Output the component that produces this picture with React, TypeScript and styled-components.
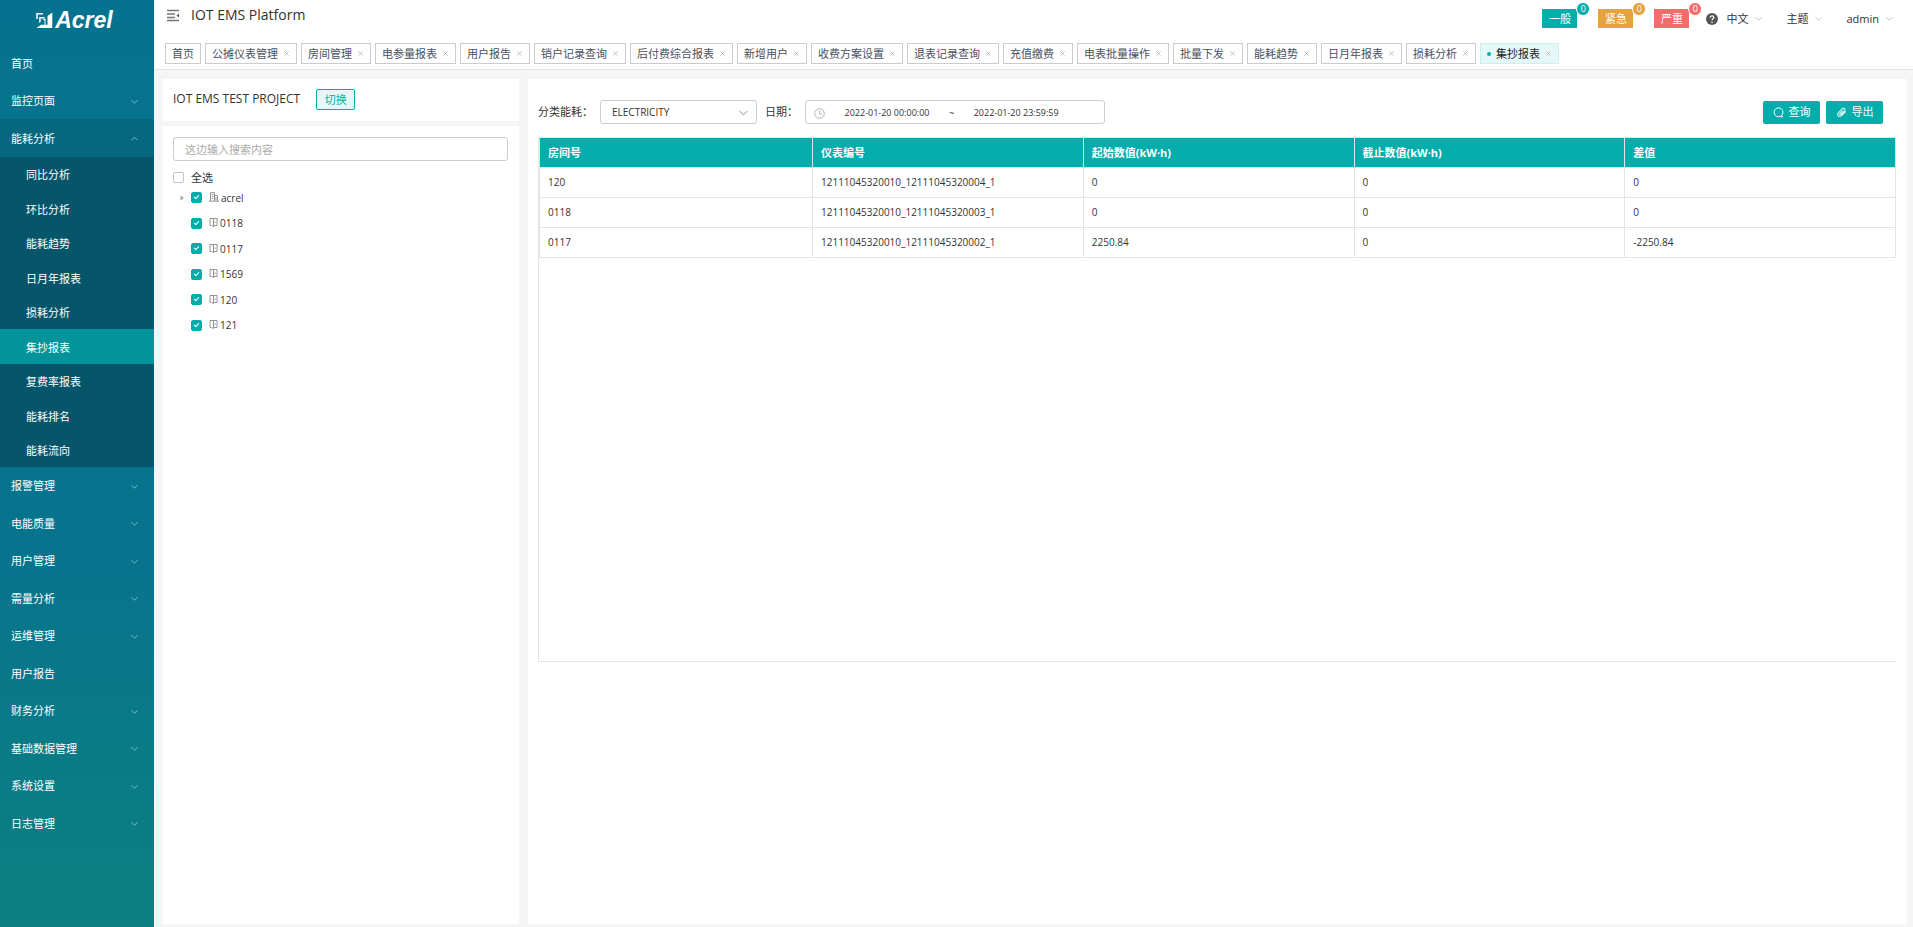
import React from "react";
import styled, { createGlobalStyle, css } from "styled-components";

const teal = "#03adab";

const GlobalStyle = createGlobalStyle`
  *, *::before, *::after { box-sizing: border-box; }
  html, body { margin: 0; padding: 0; }
  body {
    background: #f5f5f5;
    color: #333;
    font-family: "Open Sans", "Noto Sans CJK SC", sans-serif;
    font-size: 11px;
    line-height: 16px;
  }
  button, input, select { font: inherit; color: inherit; margin: 0; }
  button { cursor: pointer; }
  ul { list-style: none; margin: 0; padding: 0; }
  a { color: inherit; text-decoration: none; }
  h1, h2 { margin: 0; font-weight: 400; }
`;

const Page = styled.div`
  display: flex;
  min-height: 100vh;
`;

/* ---------- sidebar ---------- */

const Sidebar = styled.nav`
  flex: 0 0 154px;
  background: linear-gradient(180deg, #05738f 0%, #07748d 62%, #0b7f82 94%, #0b7f82 100%);
  color: #fff;
`;

const Logo = styled.div`
  display: flex;
  align-items: center;
  justify-content: center;
  gap: 2px;
  height: 44px;
  padding: 0 5px 4px 0;
`;

const LogoText = styled.span`
  font: italic 700 23px/24px "Liberation Sans", sans-serif;
`;

const MenuItem = styled.li`
  & > a { height: 38px; }
  &:nth-child(even) > a { height: 37px; }
`;

const MenuLink = styled.a<{ $open?: boolean }>`
  display: flex;
  align-items: center;
  justify-content: space-between;
  padding: 1px 16px 0 11px;
  background: ${(p) => (p.$open ? "#06687f" : "transparent")};
`;

const SubMenu = styled.ul`
  background: #05566a;
`;

const SubItem = styled.li`
  & > a { height: 34px; }
  &:nth-child(even) > a { height: 35px; }
`;

const SubLink = styled.a<{ $active?: boolean }>`
  display: flex;
  align-items: center;
  padding: 2px 0 0 26px;
  background: ${(p) => (p.$active ? "#03949b" : "transparent")};
`;

/* ---------- header ---------- */

const Main = styled.div`
  flex: 1;
  min-width: 0;
  display: flex;
  flex-direction: column;
`;

const Header = styled.header`
  background: #fff;
  border-bottom: 1px solid #e4e4e4;
`;

const TitleBar = styled.div`
  display: flex;
  align-items: flex-start;
  height: 43px;
  padding: 0 20px 0 13px;
`;

const FoldButton = styled.button`
  display: flex;
  padding: 0;
  margin: 9px 11px 0 0;
  border: 0;
  background: none;
`;

const Title = styled.h1`
  flex: 1;
  font-size: 14px;
  line-height: 30px;
  color: #303133;
`;

const Alerts = styled.div`
  display: flex;
  gap: 21px;
  margin: 9px 17px 0 0;
`;

const Alert = styled.button<{ $color: string }>`
  position: relative;
  width: 35px;
  height: 19px;
  padding: 0;
  border: 0;
  background: ${(p) => p.$color};
  color: #fff;
`;

const AlertCount = styled.span<{ $color: string }>`
  position: absolute;
  top: -7px;
  right: -13px;
  width: 14px;
  height: 14px;
  border: 1px solid #fff;
  border-radius: 7px;
  background: ${(p) => p.$color};
  font-size: 9px;
  line-height: 11px;
  text-align: center;
`;

const HeaderLinks = styled.div`
  display: flex;
  align-items: center;
  gap: 24px;
  height: 37px;
`;

const HelpButton = styled.button`
  display: flex;
  padding: 0;
  margin-right: -16px;
  border: 0;
  background: none;
`;

const Dropdown = styled.button`
  display: flex;
  align-items: center;
  gap: 7px;
  padding: 0;
  border: 0;
  background: none;
`;

const Tabs = styled.nav`
  display: flex;
  gap: 4px;
  padding: 0 11px 5px;
`;

const Tab = styled.div<{ $active?: boolean }>`
  display: flex;
  align-items: center;
  gap: 5px;
  height: 21px;
  padding: 0 6px;
  border: 1px solid ${(p) => (p.$active ? "#cdf0ef" : "#ccc")};
  background: ${(p) => (p.$active ? "#e5f7f7" : "#fff")};
  color: ${(p) => (p.$active ? "#222" : "#495060")};
  white-space: nowrap;
`;

const Dot = styled.span`
  width: 4px;
  height: 4px;
  border-radius: 2px;
  background: ${teal};
`;

const CloseButton = styled.button`
  display: flex;
  padding: 1px;
  border: 0;
  background: none;
`;

/* ---------- content ---------- */

const Content = styled.main`
  flex: 1;
  display: flex;
  gap: 9px;
  padding: 9px 6px 3px 9px;
`;

const LeftColumn = styled.div`
  flex: 0 0 356px;
  display: flex;
  flex-direction: column;
  gap: 5px;
`;

const Card = styled.section`
  background: #fff;
  padding: 10px;
`;

const ProjectCard = styled(Card)`
  display: flex;
  align-items: flex-start;
  gap: 16px;
  height: 42px;
`;

const ProjectName = styled.h2`
  font-size: 12px;
  line-height: 20px;
`;

const SwitchButton = styled.button`
  width: 39px;
  height: 21px;
  padding: 0;
  border: 1px solid ${teal};
  border-radius: 2px;
  background: #e6f7f7;
  color: ${teal};
`;

const TreeCard = styled(Card)`
  flex: 1;
  padding: 11px 11px 10px 10px;
`;

const field = css`
  height: 24px;
  border: 1px solid #ccc;
  border-radius: 3px;
  background: #fff;
`;

const SearchInput = styled.input`
  ${field}
  display: block;
  width: 100%;
  padding: 0 11px;
  margin-bottom: 9px;
  &::placeholder { color: #aaa; }
`;

const CheckLabel = styled.label`
  display: flex;
  align-items: center;
  gap: 7px;
  height: 15px;
`;

const CheckBox = styled.input`
  appearance: none;
  position: relative;
  width: 11px;
  height: 11px;
  border: 1px solid #c4c4c4;
  border-radius: 2px;
  background: #fff;
  &:checked {
    border-color: ${teal};
    background: ${teal};
  }
  &:checked::after {
    content: "";
    position: absolute;
    left: 3px;
    top: 1px;
    width: 3px;
    height: 5px;
    border: solid #fff;
    border-width: 0 1px 1px 0;
    transform: rotate(45deg);
  }
`;

const TreeRow = styled.li`
  display: flex;
  align-items: center;
  height: 25px;
  &:nth-child(even) { height: 26px; }
`;

const Expander = styled.button`
  display: flex;
  width: 18px;
  padding: 0 0 0 7px;
  border: 0;
  background: none;
`;

const NodeLabel = styled.span`
  display: flex;
  align-items: center;
  gap: 2px;
  font-size: 10px;
`;

const ReportPanel = styled(Card)`
  flex: 1;
  min-width: 0;
  padding: 21px 11px 10px 10px;
`;

const Toolbar = styled.form`
  display: flex;
  align-items: center;
  height: 24px;
  padding-right: 13px;
  margin-bottom: 13px;
`;

const FieldLabel = styled.label`
  margin-right: 7px;
`;

const SelectBox = styled.div`
  ${field}
  display: flex;
  align-items: center;
  width: 157px;
  padding-right: 8px;
  margin-right: 8px;
`;

const Select = styled.select`
  flex: 1;
  appearance: none;
  height: 22px;
  padding: 0 0 0 11px;
  border: 0;
  background: none;
  font-size: 10px;
`;

const DateRange = styled.div`
  ${field}
  display: flex;
  align-items: center;
  width: 300px;
  padding: 2px 8px 0;
  font-size: 9px;
`;

const DateInput = styled.input`
  width: 124px;
  padding: 0;
  border: 0;
  background: none;
  text-align: center;
`;

const Actions = styled.div`
  display: flex;
  gap: 6px;
  margin-left: auto;
`;

const ActionButton = styled.button`
  display: flex;
  align-items: center;
  justify-content: center;
  gap: 5px;
  width: 57px;
  height: 23px;
  padding: 0;
  border: 0;
  border-radius: 2px;
  background: ${teal};
  color: #fff;
`;

const TableFrame = styled.div`
  min-height: 525px;
  border: solid #e4e4e4;
  border-width: 1px 0 1px 1px;
`;

const Table = styled.table`
  width: 100%;
  table-layout: fixed;
  border-collapse: separate;
  border-spacing: 0;
  border-left: 1px solid #e4e4e4;
  th, td {
    height: 30px;
    padding: 0 8px;
    border-right: 1px solid #e4e4e4;
    border-bottom: 1px solid #e4e4e4;
    text-align: left;
  }
  th {
    background: ${teal};
    color: #fff;
    font-weight: 700;
  }
  th:first-child { width: 273px; }
  td {
    padding-bottom: 1px;
    font-size: 10px;
  }
`;

/* ---------- icons ---------- */

const Chevron = ({ up, color = "#8fc3cf", size = 7 }: { up?: boolean; color?: string; size?: number }) => (
  <svg width={size} height={size} viewBox="0 0 8 8" fill="none" stroke={color} strokeWidth="1">
    <path d={up ? "M.5 6 4 2.5 7.5 6" : "M.5 2.5 4 6l3.5-3.5"} />
  </svg>
);

const LogoMark = () => (
  <svg width="17" height="17" viewBox="0 0 17 17">
    <path d="M7 1.700H1V7M4 5.700h4.500" fill="none" stroke="#fff" strokeWidth="1.500" />
    <path d="M3.200 5h1.500v5L3.200 11zM16.300.5V16H.5L5 12.800h3.500V8.500L6.500 7 9.500 6.500v6.300h2V4z" fill="#fff" />
  </svg>
);

const FoldIcon = () => (
  <svg width="13" height="13" viewBox="0 0 13 13" stroke="#777" fill="#555">
    <path d="M0 1.500h12M0 5h8M0 8.500h8M0 11.500h12" fill="none" strokeWidth="1.400" />
    <path d="M12 4.500v4L9.500 6.500z" stroke="none" />
  </svg>
);

const HelpIcon = () => (
  <svg width="12" height="12" viewBox="0 0 12 12">
    <circle cx="6" cy="6" r="6" fill="#555" />
    <path d="M4.200 4.700c0-2.400 3.700-2.200 3.700-.1C7.900 5.800 6 5.900 6 7.200" fill="none" stroke="#fff" strokeWidth="1.200" />
    <circle cx="6" cy="9.200" r=".8" fill="#fff" />
  </svg>
);

const CloseIcon = () => (
  <svg width="5" height="5" viewBox="0 0 5 5" stroke="#aaa" strokeWidth=".8">
    <path d="M.5.5l4 4M4.500.5l-4 4" />
  </svg>
);

const BuildingIcon = () => (
  <svg width="10" height="11" viewBox="0 0 10 11" fill="none" stroke="#888" strokeWidth=".9">
    <path d="M1.500 9V.6h4V9M5.500 3.500h3V9M0 9.200h10M2.800 2.500h1.500M2.800 4.500h1.500M2.800 6.500h1.500M7 5v3" />
  </svg>
);

const DoorIcon = () => (
  <svg width="9" height="12" viewBox="0 0 9 12" fill="none" stroke="#888" strokeWidth=".9">
    <path d="M4.500 1.500h3.500v7H4.500M3.500 1.500H1v7h1M1 1.500h3.500v8L2.500 8.500M6 4.500v1.500" />
  </svg>
);

const ClockIcon = () => (
  <svg width="11" height="11" viewBox="0 0 11 11" fill="none" stroke="#b5b5b5">
    <circle cx="5.500" cy="5.500" r="4.800" />
    <path d="M5.500 2.500v3.500H8" />
  </svg>
);

const SearchIcon = () => (
  <svg width="11" height="11" viewBox="0 0 11 11" fill="none" stroke="#fff">
    <circle cx="5.500" cy="5.300" r="4.400" />
    <path d="M7.800 9.800h2.200" />
  </svg>
);

const ClipIcon = () => (
  <svg width="11" height="11" viewBox="0 0 11 11" fill="none" stroke="#d8f3f3" strokeWidth="1.100">
    <path d="M9.700 4.500 5.500 8.700C3.300 10.800.3 8 2.300 5.800l3.800-4c1.800-1.600 4 .6 2.500 2.200L5 7.500c-.9.700-1.700-.3-1.100-1L7 3.300" />
  </svg>
);

const ArrowIcon = () => (
  <svg width="5" height="6" viewBox="0 0 5 6" fill="#aaa">
    <path d="M.5.300l3.500 2.700L.5 5.700z" />
  </svg>
);

/* ---------- data ---------- */

const menu: { label: string; leaf?: boolean; open?: boolean }[] = [
  { label: "首页", leaf: true },
  { label: "监控页面" },
  { label: "能耗分析", open: true },
  { label: "报警管理" },
  { label: "电能质量" },
  { label: "用户管理" },
  { label: "需量分析" },
  { label: "运维管理" },
  { label: "用户报告", leaf: true },
  { label: "财务分析" },
  { label: "基础数据管理" },
  { label: "系统设置" },
  { label: "日志管理" },
];

const subMenu = ["同比分析", "环比分析", "能耗趋势", "日月年报表", "损耗分析", "集抄报表", "复费率报表", "能耗排名", "能耗流向"];

const tabs = [
  "首页", "公摊仪表管理", "房间管理", "电参量报表", "用户报告", "销户记录查询", "后付费综合报表", "新增用户", "收费方案设置",
  "退表记录查询", "充值缴费", "电表批量操作", "批量下发", "能耗趋势", "日月年报表", "损耗分析", "集抄报表",
];

const alerts = [
  { label: "一般", color: teal },
  { label: "紧急", color: "#e6a23c" },
  { label: "严重", color: "#f56c6c" },
];

const nodes = ["acrel", "0118", "0117", "1569", "120", "121"];

const columns = ["房间号", "仪表编号", "起始数值(kW·h)", "截止数值(kW·h)", "差值"];

const rows = [
  ["120", "12111045320010_12111045320004_1", "0", "0", "0"],
  ["0118", "12111045320010_12111045320003_1", "0", "0", "0"],
  ["0117", "12111045320010_12111045320002_1", "2250.84", "0", "-2250.84"],
];

export default function App() {
  return (
    <Page>
      <GlobalStyle />
      <Sidebar>
        <Logo>
          <LogoMark />
          <LogoText>Acrel</LogoText>
        </Logo>
        <ul>
          {menu.map((item) => (
            <MenuItem key={item.label}>
              <MenuLink href="#" $open={item.open}>
                {item.label}
                {!item.leaf && <Chevron up={item.open} />}
              </MenuLink>
              {item.open && (
                <SubMenu>
                  {subMenu.map((label) => (
                    <SubItem key={label}>
                      <SubLink href="#" $active={label === "集抄报表"}>{label}</SubLink>
                    </SubItem>
                  ))}
                </SubMenu>
              )}
            </MenuItem>
          ))}
        </ul>
      </Sidebar>

      <Main>
        <Header>
          <TitleBar>
            <FoldButton aria-label="折叠菜单"><FoldIcon /></FoldButton>
            <Title>IOT EMS Platform</Title>
            <Alerts>
              {alerts.map((a) => (
                <Alert key={a.label} $color={a.color}>
                  {a.label}
                  <AlertCount $color={a.color}>0</AlertCount>
                </Alert>
              ))}
            </Alerts>
            <HeaderLinks>
              <HelpButton aria-label="帮助"><HelpIcon /></HelpButton>
              <Dropdown>中文<Chevron color="#bbb" /></Dropdown>
              <Dropdown>主题<Chevron color="#bbb" /></Dropdown>
              <Dropdown>admin<Chevron color="#bbb" /></Dropdown>
            </HeaderLinks>
          </TitleBar>
          <Tabs>
            {tabs.map((label, i) => {
              const active = i === tabs.length - 1;
              return (
                <Tab key={label} $active={active}>
                  {active && <Dot />}
                  <a href="#">{label}</a>
                  {i > 0 && <CloseButton aria-label={`关闭${label}`}><CloseIcon /></CloseButton>}
                </Tab>
              );
            })}
          </Tabs>
        </Header>

        <Content>
          <LeftColumn>
            <ProjectCard>
              <ProjectName>IOT EMS TEST PROJECT</ProjectName>
              <SwitchButton>切换</SwitchButton>
            </ProjectCard>
            <TreeCard>
              <SearchInput placeholder="这边输入搜索内容" aria-label="搜索" />
              <CheckLabel>
                <CheckBox type="checkbox" />
                全选
              </CheckLabel>
              <ul>
                {nodes.map((name, i) => (
                  <TreeRow key={name}>
                    <Expander aria-label={name}>{i === 0 && <ArrowIcon />}</Expander>
                    <CheckLabel>
                      <CheckBox type="checkbox" defaultChecked />
                      <NodeLabel>
                        {i === 0 ? <BuildingIcon /> : <DoorIcon />}
                        {name}
                      </NodeLabel>
                    </CheckLabel>
                  </TreeRow>
                ))}
              </ul>
            </TreeCard>
          </LeftColumn>

          <ReportPanel>
            <Toolbar onSubmit={(e) => e.preventDefault()}>
              <FieldLabel htmlFor="energy">分类能耗：</FieldLabel>
              <SelectBox>
                <Select id="energy">
                  <option>ELECTRICITY</option>
                </Select>
                <Chevron color="#b5b5b5" size={9} />
              </SelectBox>
              <FieldLabel htmlFor="from">日期：</FieldLabel>
              <DateRange>
                <ClockIcon />
                <DateInput id="from" defaultValue="2022-01-20 00:00:00" />
                ~
                <DateInput aria-label="结束日期" defaultValue="2022-01-20 23:59:59" />
              </DateRange>
              <Actions>
                <ActionButton><SearchIcon />查询</ActionButton>
                <ActionButton type="button"><ClipIcon />导出</ActionButton>
              </Actions>
            </Toolbar>
            <TableFrame>
              <Table>
                <thead>
                  <tr>{columns.map((c) => <th key={c}>{c}</th>)}</tr>
                </thead>
                <tbody>
                  {rows.map((r) => (
                    <tr key={r[0]}>{r.map((v, i) => <td key={i}>{v}</td>)}</tr>
                  ))}
                </tbody>
              </Table>
            </TableFrame>
          </ReportPanel>
        </Content>
      </Main>
    </Page>
  );
}
